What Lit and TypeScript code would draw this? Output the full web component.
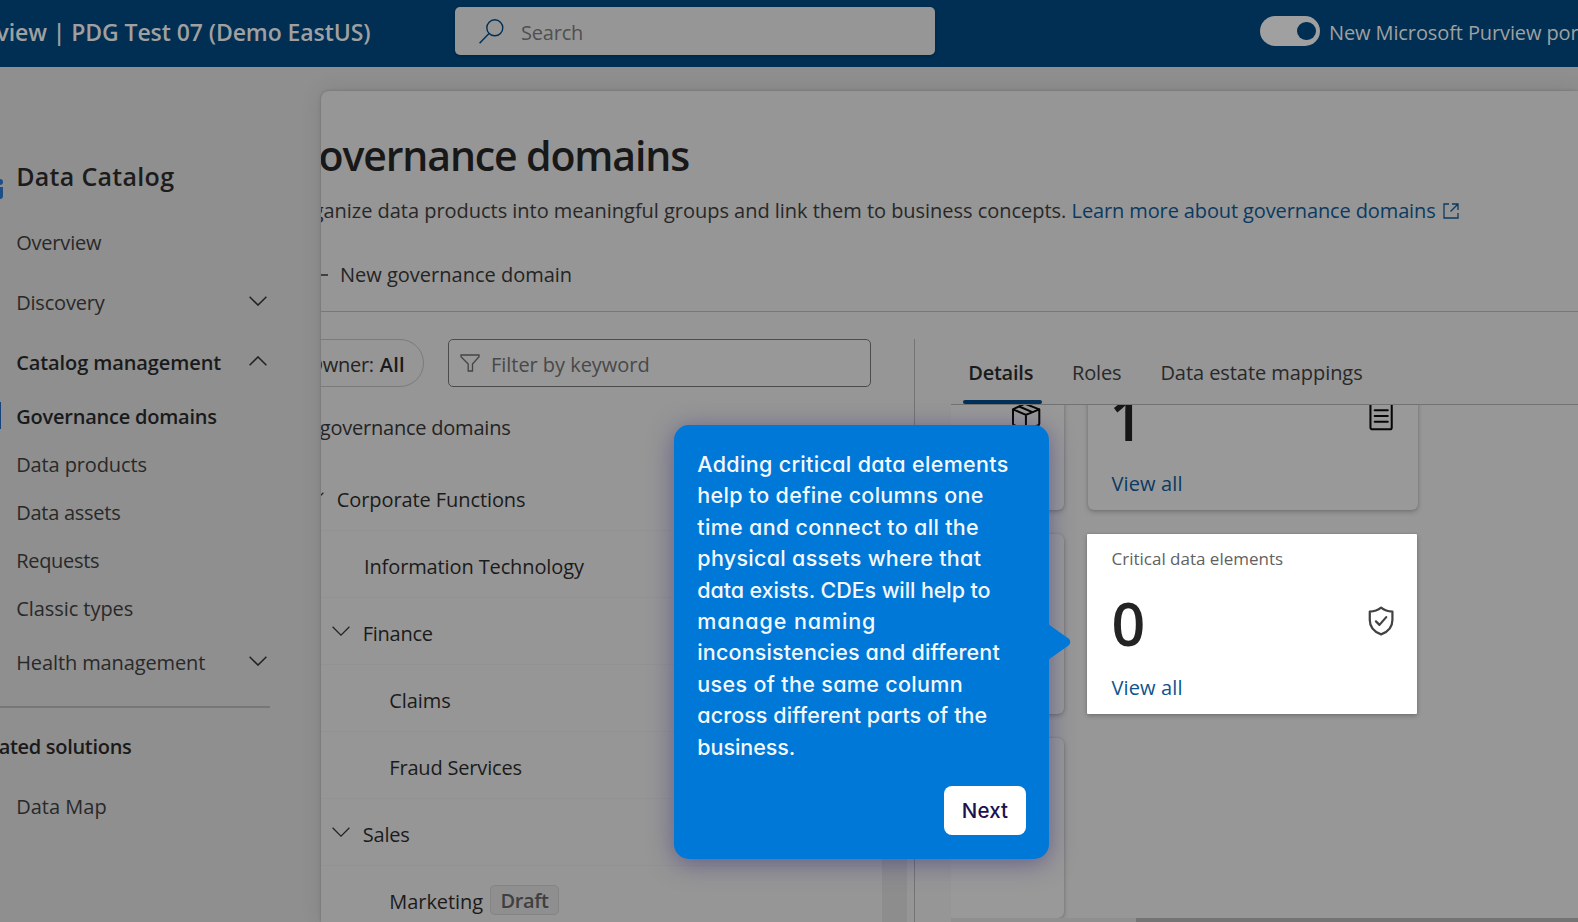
import { LitElement, html, css, svg } from "lit";
import { customElement } from "lit/decorators.js";
import { classMap } from "lit/directives/class-map.js";

const spacing = (value: number) => `letter-spacing:${value}px`;

const chevronDown = html`<svg class="chev" width="18" height="10" viewBox="0 0 18 10"><path d="M.6.8 9 9.1 17.4.8" /></svg>`;
const chevronUp = html`<svg class="chev" width="18" height="10" viewBox="0 0 18 10"><path d="M.6 9.2 9 .9l8.4 8.3" /></svg>`;

interface NavItem { label: string; ls: number; sub?: boolean; bold?: boolean; active?: boolean; chevron?: "up" | "down"; }
interface Domain { label: string; ls: number; level: number; open?: boolean; badge?: string; }

const NAV: NavItem[] = [
  { label: "Overview", ls: -0.2 },
  { label: "Discovery", ls: -0.2, chevron: "down" },
  { label: "Catalog management", ls: -0.1, bold: true, chevron: "up" },
  { label: "Governance domains", ls: -0.22, bold: true, sub: true, active: true },
  { label: "Data products", ls: -0.12, sub: true },
  { label: "Data assets", ls: -0.26, sub: true },
  { label: "Requests", ls: -0.3, sub: true },
  { label: "Classic types", ls: -0.06, sub: true },
  { label: "Health management", ls: -0.11, chevron: "down" },
];

const DOMAINS: Domain[] = [
  { label: "Corporate Functions", ls: -0.09, level: 0, open: true },
  { label: "Information Technology", ls: -0.12, level: 1 },
  { label: "Finance", ls: -0.25, level: 1, open: true },
  { label: "Claims", ls: -0.08, level: 2 },
  { label: "Fraud Services", ls: -0.18, level: 2 },
  { label: "Sales", ls: -0.19, level: 1, open: true },
  { label: "Marketing", ls: -0.06, level: 2, badge: "Draft" },
];

const TIP: [string, number][] = [
  ["Adding critical data elements", 0.33],
  ["help to define columns one", 0.31],
  ["time and connect to all the", 0.31],
  ["physical assets where that", 0.3],
  ["data exists. CDEs will help to", -0.1],
  ["manage naming", 0.9],
  ["inconsistencies and different", 0.16],
  ["uses of the same column", 0.33],
  ["across different parts of the", 0.08],
  ["business.", -0.05],
];

const icons = {
  box: svg`<path d="M1 8.200 12.600 2.600a1.600 1.600 0 0 1 1.400 0L28.200 8.200v14.600a2 2 0 0 1-1.200 1.800L15 29.400a1.800 1.800 0 0 1-1.400 0L2.200 24.600A2 2 0 0 1 1 22.800ZM1 8.200l13.400 5.600L28.200 8.200M14.400 13.800v16M7.500 5.200l13.500 5.800"/>`,
  doc: svg`<rect x="4.600" y="1.200" width="22" height="27.600" rx="2"/><path d="M9 9h13.500M9 15h13.500M9 21h13.500"/>`,
  shield: svg`<path d="M15.600 1.200c3.200 2.500 7.200 3.900 11.700 4.200v8.500c0 7.200-4.300 12.200-11.700 14.900C8.200 26.100 3.900 21.100 3.900 13.900V5.400c4.500-.3 8.500-1.700 11.700-4.200Z"/><path d="m10.300 15.400 3.600 3.600 7-8"/>`,
};

@customElement("app-root")
export class AppRoot extends LitElement {
  static styles = css`
    :host { display: block; position: relative; width: 100%; height: 922px; overflow: hidden; background: #8f8f8f;
      font: 400 20px/28px "Open Sans", "Noto Sans", sans-serif; color: #242424; }
    * { box-sizing: border-box; }
    svg { display: block; flex: none; fill: none; stroke: currentColor; }
    span, a, div { white-space: nowrap; }
    .page { display: flex; flex-direction: column; height: 922px; }
    .chev { stroke-width: 1.5; }

    .top { display: flex; align-items: flex-start; height: 67px; flex: none; background: #002f53; color: #a0a0a0; overflow: hidden; }
    .top > * { flex: none; }
    .brand { display: flex; justify-content: flex-end; width: 370.500px; overflow: hidden; padding-top: 18px; font-weight: 600; font-size: 23px; letter-spacing: -.08px; }
    .search { display: flex; align-items: center; width: 480px; height: 48px; margin: 7px 0 0 84.500px; padding: 3px 0 0 24px; gap: 17px;
      background: #969696; border-radius: 5px; color: #505050; letter-spacing: -.2px; box-shadow: 0 1px 3px rgba(0,0,0,.3); }
    .search svg { color: #002f53; margin-top: -3px; stroke-width: 1.4; }
    .switch { display: flex; align-items: center; justify-content: flex-end; width: 60px; height: 30px; margin: 16px 9px 0 325px; padding-right: 4.500px; border-radius: 15px; background: #a0a0a0; }
    .knob { width: 18.500px; height: 18.500px; border-radius: 50%; background: #002f53; }
    .portal { padding-top: 18.500px; letter-spacing: -.11px; }

    .body { display: flex; flex: 1; min-height: 0; }
    .side { width: 321px; flex: none; padding-top: 79px; color: #292929; }
    .app { display: flex; align-items: center; height: 60px; margin-bottom: 6px; font-size: 25px; font-weight: 600; letter-spacing: .3px; color: #1c1c1c; }
    .app svg { margin: 26px 13.200px 0 -19px; }
    .nav { display: flex; align-items: center; justify-content: space-between; height: 60px; padding: 2px 0 0 16.200px; width: 267px; }
    .nav svg { margin-bottom: 4px; color: #222; }
    .nav.sub { height: 48px; }
    .nav.bold { font-weight: 600; color: #1a1a1a; }
    .nav.active { border-left: 1px solid #16447a; border-image: linear-gradient(transparent 11px, #16447a 11px 36px, transparent 36px) 1; padding-left: 15.200px; }
    .rule { width: 270px; height: 2px; background: #777; margin: 14px 0 8px; }
    .related { height: 60px; line-height: 62px; width: 131.500px; display: flex; justify-content: flex-end; overflow: hidden; font-weight: 600; letter-spacing: -.3px; color: #1a1a1a; }

    .panel { flex: 1; min-width: 0; margin-top: 24px; display: flex; flex-direction: column; background: #969696; border-radius: 8px 0 0 0; box-shadow: 0 0 3px rgba(0,0,0,.22), 0 0 22px rgba(0,0,0,.1); }
    .clip { display: flex; flex-direction: column; flex: 1; min-height: 0; overflow: hidden; border-radius: 8px 0 0 0; }
    h1 { margin: 0 0 0 -31px; padding-top: 36px; font-size: 41px; line-height: 56px; height: 97px; font-weight: 600; letter-spacing: -1.130px; color: #181818; white-space: nowrap; }
    .lead { display: flex; align-items: center; margin-left: -32px; height: 46px; letter-spacing: -.030px; color: #282828; }
    .lead a { color: #0b3a61; letter-spacing: -.12px; margin-left: 5.300px; }
    .lead svg { margin-left: 7.500px; color: #0b3a61; stroke-width: 1.300; }
    .cmd { display: flex; align-items: center; gap: 12px; height: 78px; padding-top: 4px; margin-left: -11px; border-bottom: 1px solid #787878; }
    .cmd svg { stroke-width: 1.500; }

    .cols { display: flex; flex: 1; min-height: 0; }
    .left { width: 593px; flex: none; padding-top: 27px; }
    .filters { display: flex; gap: 24px; }
    .pill { display: flex; align-items: center; justify-content: flex-end; gap: 6px; width: 134.500px; height: 48px; margin-left: -32px; padding: 3px 17.500px 0 0; border: 1px solid #7b7b7b; border-radius: 24px; letter-spacing: -.3px; }
    .pill b { font-weight: 600; color: #1a1a1a; letter-spacing: .3px; }
    .kw { display: flex; align-items: center; gap: 11px; width: 423px; height: 48px; padding: 3px 0 0 11.500px; border: 1px solid #4c4c4c; border-radius: 5px; background: #989898; color: #484848; letter-spacing: -.04px; }
    .kw svg { stroke-width: 1.300; color: #444; margin-bottom: 4px; }
    .all { height: 77px; padding-top: 27px; margin-left: -32px; width: 221.500px; display: flex; justify-content: flex-end; letter-spacing: -.22px; }
    .list { height: 458px; display: flex; overflow: hidden; }
    .row { display: flex; align-items: center; height: 67px; width: 561px; padding-top: 5px; border-bottom: 1px solid #929292; color: #1b1b1b; }
    .row svg { margin-bottom: 5px; color: #222; stroke-width: 1.200; }
    .in { display: flex; align-items: center; }
    .l0 .in { margin-left: -14.700px; gap: 12.500px; }
    .l1 .in { margin-left: 11.200px; gap: 12.500px; }
    .l1.leaf .in { margin-left: 43px; }
    .l2 .in { margin-left: 68.300px; gap: 6.800px; }
    .badge { height: 30px; line-height: 29px; padding: 0 9px 0 9.500px; border: 1px solid #848484; border-radius: 5px; background: #8f8f8f; color: #3f3f3f; font-weight: 600; letter-spacing: -.36px; margin-top: -3px; }
    .bar { width: 25px; background: #8d8d8d; }

    .right { flex: 1; min-width: 0; margin-top: 27px; padding-left: 36px; border-left: 1px solid #747474; display: flex; flex-direction: column; }
    .tabs { display: flex; height: 66px; border-bottom: 1px solid #737373; color: #292929; padding-left: 12px; }
    .tab { height: 65px; padding-top: 20px; }
    .tab.on { width: 79px; padding-left: 5.200px; font-weight: 600; color: #1b1b1b; letter-spacing: -.22px; }
    .tab.on::after { content: ""; display: block; width: 79px; height: 4px; margin: 13px 0 0 -5.200px; background: #003158; border-radius: 2px; }
    .tab.roles { margin-left: 30px; letter-spacing: -.16px; }
    .tab.estate { margin-left: 39px; letter-spacing: -.06px; }
    .cards { flex: 1; min-height: 0; overflow: hidden; background: #979797; display: flex; flex-direction: column; }
    .grid { display: grid; grid-template-columns: 330px 330px; grid-auto-rows: 180px; gap: 24px; margin: -75px 0 0 -217px; height: 588px; flex: none; }
    .card { display: flex; flex-direction: column; padding: 12px 23px 12px 23.500px; border-radius: 6px; background: #999; box-shadow: 0 2px 5px rgba(0,0,0,.22), 0 0 2px rgba(0,0,0,.15); }
    .card .t { font-size: 17px; line-height: 26px; height: 26px; color: #424242; }
    .num { display: flex; align-items: center; justify-content: space-between; height: 102px; font-size: 59px; font-weight: 600; color: #161616; }
    .num span { margin: -3px 0 0 -2px; }
    .num svg { margin: 0 -1px 5.500px 0; color: #060606; stroke-width: 2.100; }
    .card a { color: #0b3a61; letter-spacing: .13px; }
    .hot { background: #fff; border-radius: 1px; margin: 0 1px 0 -1px; padding-left: 24.500px; padding-right: 22px; }
    .hot .t { color: #616161; }
    .hot .num { color: #242424; }
    .hot .num span { margin: 0; }
    .hot .num svg { color: #424242; margin-bottom: 4px; stroke-width: 2.300; }
    .hot a { color: #0f548c; padding-top: 1px; }
    .hbar { height: 5px; margin-top: auto; background: linear-gradient(90deg, #8f8f8f 185px, #747474 185px); flex: none; }

    .tip { position: absolute; left: 674px; top: 425px; width: 375px; height: 434px; padding: 24px 23px 24px 23.300px; border-radius: 15px; background: #0078d7; color: #f4f8fd;
      font: 500 21.500px/31.400px Inter, sans-serif; font-feature-settings: "cv11"; box-shadow: 0 4px 24px rgba(45,38,120,.5); display: flex; flex-direction: column; }
    .tip svg { position: absolute; left: 374px; top: 198px; fill: #0078d7; stroke: none; }
    .next { align-self: flex-end; width: 82px; height: 49px; margin-top: auto; border-radius: 8px; background: #fff; color: #1b1150; font-size: 20.500px; line-height: 49px; text-align: center; letter-spacing: .1px; }
  `;

  private nav(i: NavItem) {
    return html`<div class=${classMap({ nav: true, sub: !!i.sub, bold: !!i.bold, active: !!i.active })}>
      <span style=${spacing(i.ls)}>${i.label}</span>${i.chevron === "up" ? chevronUp : i.chevron === "down" ? chevronDown : ""}
    </div>`;
  }

  private row(d: Domain) {
    return html`<div class="row l${d.level} ${d.open ? "" : "leaf"}"><div class="in">
      ${d.open ? chevronDown : ""}<span style=${spacing(d.ls)}>${d.label}</span>${d.badge ? html`<span class="badge">${d.badge}</span>` : ""}
    </div></div>`;
  }

  private card(title = "", num = "", icon?: unknown, hot = false) {
    return html`<div class=${classMap({ card: true, hot })}>
      <div class="t">${title}</div>
      <div class="num"><span>${num}</span>${icon ? html`<svg width="30" height="30" viewBox="0 0 31 30" stroke-linejoin="round" stroke-linecap="round">${icon}</svg>` : ""}</div>
      ${num ? html`<a>View all</a>` : ""}
    </div>`;
  }

  render() {
    return html`
      <div class="page">
        <div class="top">
          <div class="brand"><span>Microsoft Purview | PDG Test 07 (Demo EastUS)</span></div>
          <div class="search">
            <svg width="25" height="25" viewBox="0 0 25 25"><circle cx="15.800" cy="8.800" r="8" /><path d="M10 14.600.6 24.200" /></svg>
            <span>Search</span>
          </div>
          <div class="switch"><div class="knob"></div></div>
          <div class="portal">New Microsoft Purview portal</div>
        </div>
        <div class="body">
          <div class="side">
            <div class="app">
              <svg width="22" height="20" viewBox="0 0 22 20"><g fill="#1c4f88" stroke="none"><circle cx="19" cy="3" r="3" /><path d="M2 8h20v9a3 3 0 0 1-3 3H2z" /></g></svg>
              <span>Data Catalog</span>
            </div>
            ${NAV.map((i) => this.nav(i))}
            <div class="rule"></div>
            <div class="related">Related solutions</div>
            ${this.nav({ label: "Data Map", ls: 0.02 })}
          </div>
          <div class="panel"><div class="clip">
            <h1>Governance domains</h1>
            <div class="lead">
              <span>Organize data products into meaningful groups and link them to business concepts.</span>
              <a>Learn more about governance domains</a>
              <svg width="16" height="16" viewBox="0 0 16 16"><path d="M6 1H1v14h14v-5M9 1h6v6M15 1 7.500 8.500" /></svg>
            </div>
            <div class="cmd">
              <svg width="18" height="18" viewBox="0 0 18 18"><path d="M9 0v18M0 9h18" /></svg>
              <span>New governance domain</span>
            </div>
            <div class="cols">
              <div class="left">
                <div class="filters">
                  <div class="pill"><span>Owner:</span><b>All</b></div>
                  <div class="kw">
                    <svg width="20" height="18" viewBox="0 0 20 18"><path d="M1 1h18v1.800L12.500 10v7h-4.300v-7L1 2.800Z" /></svg>
                    <span>Filter by keyword</span>
                  </div>
                </div>
                <div class="all">All governance domains</div>
                <div class="list"><div>${DOMAINS.map((d) => this.row(d))}</div><div class="bar"></div></div>
              </div>
              <div class="right">
                <div class="tabs">
                  <div class="tab on">Details</div>
                  <div class="tab roles">Roles</div>
                  <div class="tab estate">Data estate mappings</div>
                </div>
                <div class="cards">
                  <div class="grid">
                    ${this.card("", "0", icons.box)}
                    ${this.card("", "1", icons.doc)}
                    ${this.card()}
                    ${this.card("Critical data elements", "0", icons.shield, true)}
                    ${this.card()}
                  </div>
                  <div class="hbar"></div>
                </div>
              </div>
            </div>
          </div></div>
        </div>
      </div>
      <div class="tip">
        ${TIP.map(([t, ls]) => html`<span style=${spacing(ls)}>${t}</span>`)}
        <div class="next">Next</div>
        <svg width="23" height="38" viewBox="0 0 23 38"><path d="M0 1 20.500 15.600a4.200 4.200 0 0 1 0 6.800L0 37Z" /></svg>
      </div>`;
  }
}
